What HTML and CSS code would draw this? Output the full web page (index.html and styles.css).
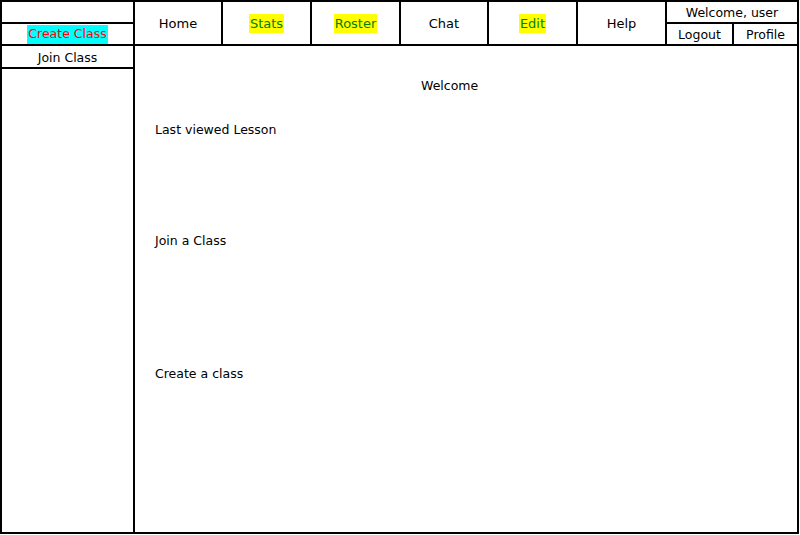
FILE: index.html
```html
<!DOCTYPE html>
<html>
<head>
<meta charset="utf-8">
<link rel="stylesheet" href="styles.css">
</head>
<body>
<div class="frame">
  <div class="cell side-top"></div>
  <div class="cell side-create"><span class="hl-cyan">Create Class</span></div>
  <div class="cell nav n1">Home</div>
  <div class="cell nav n2"><span class="hl-yellow">Stats</span></div>
  <div class="cell nav n3"><span class="hl-yellow">Roster</span></div>
  <div class="cell nav n4">Chat</div>
  <div class="cell nav n5"><span class="hl-yellow">Edit</span></div>
  <div class="cell nav n6">Help</div>
  <div class="cell small welcome-user">Welcome, user</div>
  <div class="cell small logout">Logout</div>
  <div class="cell small profile">Profile</div>
  <div class="cell small side-join">Join Class</div>
  <div class="cell side-rest"></div>
  <div class="cell main">
    <div class="main-title">Welcome</div>
    <div class="section s1">Last viewed Lesson</div>
    <div class="section s2">Join a Class</div>
    <div class="section s3">Create a class</div>
  </div>
</div>
</body>
</html>
```

FILE: styles.css
```css
* { box-sizing: border-box; }
html, body { margin: 0; padding: 0; background: #fff; }
body {
  font-family: "DejaVu Sans", Tahoma, sans-serif;
  font-size: 12.5px;
  color: #000;
}
.frame {
  width: 799px;
  height: 534px;
  display: grid;
  grid-template-columns: 131px 86px 87px 87px 86px 87px 87px 65px 63px;
  grid-template-rows: 20px 20px 21px 463px;
  gap: 2px;
  padding: 2px;
  background: #000;
}
.cell {
  background: #fff;
  display: flex;
  align-items: center;
  justify-content: center;
  line-height: 1;
}
.small { padding-top: 3px; }
.side-top { grid-column: 1; grid-row: 1; }
.side-create { grid-column: 1; grid-row: 2; padding-top: 1px; }
.side-join { grid-column: 1; grid-row: 3; }
.side-rest { grid-column: 1; grid-row: 4; }
.nav { grid-row: 1 / span 2; font-size: 13px; padding-top: 1px; }
.n1 { grid-column: 2; }
.n2 { grid-column: 3; padding-top: 0; }
.n3 { grid-column: 4; padding-top: 0; }
.n4 { grid-column: 5; }
.n5 { grid-column: 6; }
.n6 { grid-column: 7; }
.welcome-user { grid-column: 8 / span 2; grid-row: 1; }
.logout { grid-column: 8; grid-row: 2; }
.profile { grid-column: 9; grid-row: 2; }
.main {
  grid-column: 2 / span 8;
  grid-row: 3 / span 2;
  display: block;
  padding: 0 20px;
}
.main-title { margin: 34px 0 0 266px; }
.s1 { margin-top: 31px; }
.s2 { margin-top: 99px; }
.s3 { margin-top: 120px; }
.hl-cyan { background: #00ffff; color: #ff0000; padding: 3px 1px 3px; }
.hl-yellow { background: #ffff00; color: #008000; padding: 3px 1px 3px; }
```
